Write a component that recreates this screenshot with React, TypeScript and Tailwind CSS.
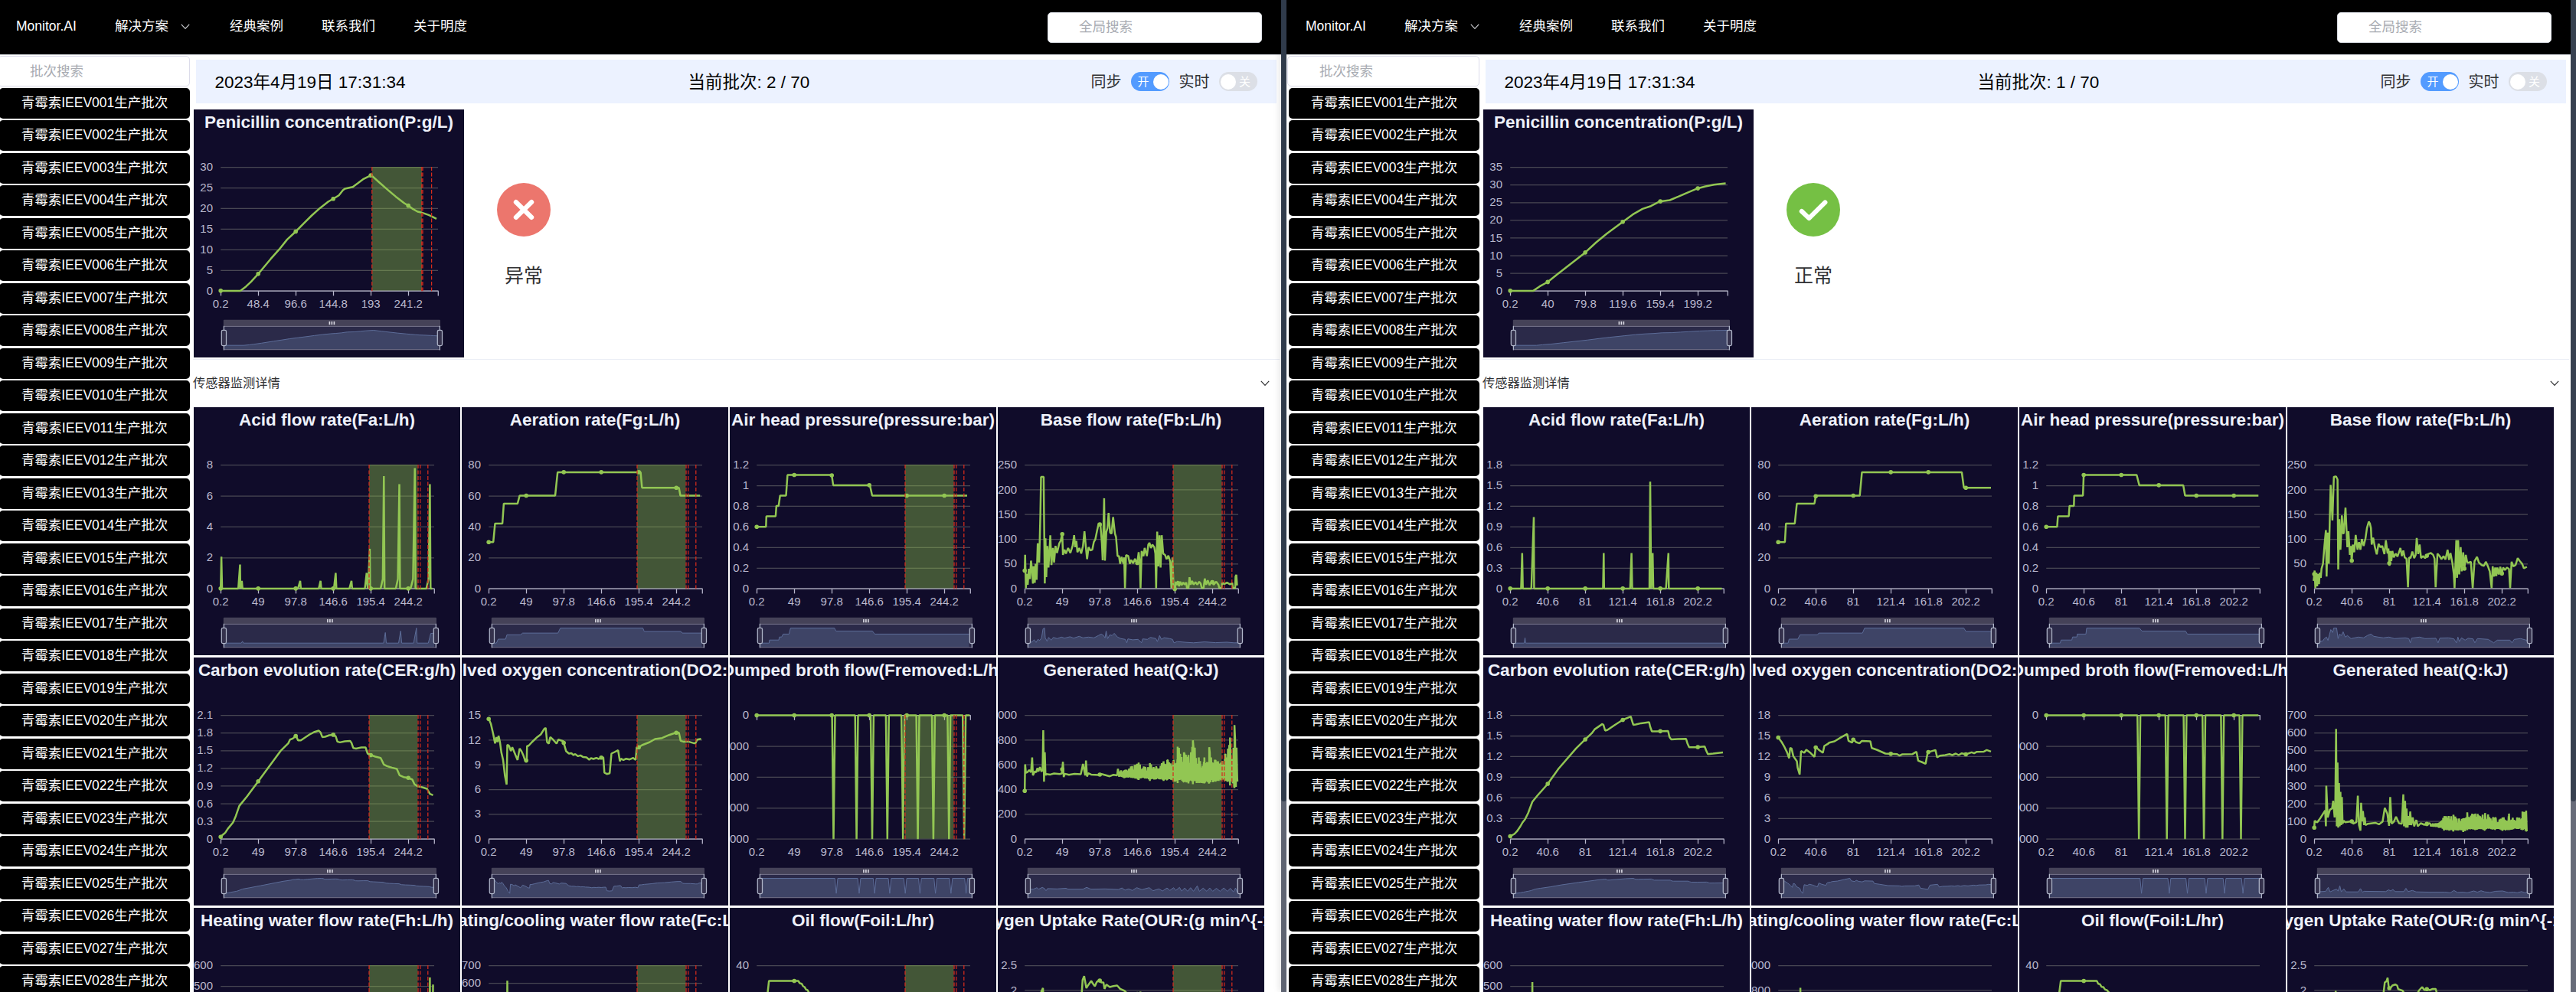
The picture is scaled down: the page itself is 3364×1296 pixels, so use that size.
import React from "react";

const FONT = "font-['Liberation_Sans','Noto_Sans_CJK_SC',sans-serif]";
const GREEN = "#92c653";

type Pt = [number, number];

type Series = {
  title: string;
  max: number;
  step: number;
  negative?: boolean;
  // digitizing frame: x of the y axis, y of the bottom grid line, horizontal units per pixel
  frame: [number, number, number];
  pts: Pt[];
  shadow?: Pt[];
};

const P = (s: string): Pt[] => s.trim().split(/\s+/).map((p) => p.split(",").map(Number) as Pt);

// Dense oscillation that stays inside an envelope of [x, top, bottom] knots.
function oscillate(env: [number, number, number][], dx: number): Pt[] {
  const out: Pt[] = [];
  let seed = 7;
  let up = true;
  for (let i = 0; i < env.length - 1; i++) {
    const [xa, ta, ba] = env[i];
    const [xb, tb, bb] = env[i + 1];
    out.push([xa, ta]);
    for (let x = xa + dx; x < xb; x += dx) {
      seed = (seed * 16807) % 2147483647;
      const r = seed / 2147483647;
      const k = (x - xa) / (xb - xa);
      const top = ta + (tb - ta) * k;
      const bot = ba + (bb - ba) * k;
      const mid = (top + bot * 1.6) / 2.6;
      out.push([x, up ? mid + (top - mid) * (0.35 + 0.65 * r) : mid + (bot - mid) * (0.75 + 0.25 * r)]);
      up = !up;
    }
    out.push([xb, bb]);
  }
  return out;
}

function drops(start: number, end: number, centers: number[]): Pt[] {
  const out: Pt[] = [[start, 253]];
  centers.forEach((c) => out.push([c - 4, 253], [c, 738], [c + 4, 253]));
  out.push([end, 253]);
  return out;
}

const T = {
  pen: "Penicillin concentration(P:g/L)",
  acid: "Acid flow rate(Fa:L/h)",
  aer: "Aeration rate(Fg:L/h)",
  air: "Air head pressure(pressure:bar)",
  base: "Base flow rate(Fb:L/h)",
  cer: "Carbon evolution rate(CER:g/h)",
  do2: "Dissolved oxygen concentration(DO2:mg/L)",
  dump: "Dumped broth flow(Fremoved:L/h)",
  heat: "Generated heat(Q:kJ)",
  hw: "Heating water flow rate(Fh:L/h)",
  cw: "Heating/cooling water flow rate(Fc:L/h)",
  oil: "Oil flow(Foil:L/hr)",
  our: "Oxygen Uptake Rate(OUR:(g min^{-1}))",
};

const A = 2.1778;
const B = 2.063;
const C = 2.1075;

const penicillinFault: Series = {
  title: T.pen, max: 30, step: 5, frame: [538, 1140, 1.8667],
  pts: P("538,1139 586,1139 600,1122 612,1104 630,1072 660,1014 680,978 700,938 721,907 740,876 760,844 780,815 800,790 813,778 826,765 836,745 841,739 860,732 872,718 885,702 905,686 925,715 945,743 965,770 985,795 997,807 1007,819 1018,829 1029,833 1045,842 1053,848 1064,857"),
};
const penicillinOk: Series = {
  title: T.pen, max: 35, step: 5, frame: [570, 1140, 1.8233],
  pts: P("570,1139 625,1139 640,1122 659,1105 690,1064 748,990 775,949 800,915 837,870 862,840 885,818 905,807 926,789 950,784 970,770 990,756 1016,738 1035,730 1055,723 1083,718"),
};

const faultSeries: Series[] = [
  {
    title: T.acid, max: 8, step: 2, frame: [105, 928, A],
    pts: P("105,927 107,802 109,927 155,927 160,833 161,927 165,897 167,927 325,927 331,897 333,927 384,927 389,897 391,927 427,927 432,866 434,927 471,927 477,897 479,927 515,927 520,866 523,927 526,866 529,771 530,927 560,927 566,890 569,486 571,927 603,927 609,890 613,518 615,927 645,927 652,890 657,455 659,927 690,927 696,890 700,518 702,927 707,927"),
    shadow: P("105,0 155,0 158,0.12 161,0 562,0 567,0.7 570,0 605,0 611,0.8 614,0 648,0 656,1 658,0 690,0 697,0.64 707,0.66"),
  },
  {
    title: T.aer, max: 80, step: 20, frame: [867, 928, A],
    pts: P("867,745 880,745 885,672 906,672 910,594 949,594 955,563 1056,563 1063,471 1299,471 1303,532 1408,532 1412,563 1468,563"),
  },
  {
    title: T.air, max: 1.2, step: 0.2, frame: [99, 928, B],
    pts: P("99,685 124,685 125,644 150,644 152,603 158,603 162,563 178,563 182,482 301,482 305,522 404,522 410,563 666,563"),
  },
  {
    title: T.base, max: 250, step: 50, frame: [821, 928, B],
    pts: P("821,857 822,795 824,925 827,870 829,912 832,850 835,890 838,818 841,860 843,908 845,840 848,905 850,830 853,893 856,750 860,825 863,640 865,489 872,489 873,640 875,907 877,730 879,882 882,760 885,845 888,770 890,718 893,835 897,768 900,825 904,760 908,788 914,750 918,740 922,710 924,795 928,775 932,790 938,768 944,788 950,760 954,718 957,765 960,740 963,785 968,768 973,790 978,760 982,703 986,770 989,812 993,765 998,778 1003,775 1007,745 1011,735 1016,700 1020,672 1025,678 1029,750 1031,816 1035,573 1037,818 1041,705 1044,690 1047,631 1051,708 1055,712 1059,647 1064,712 1067,725 1071,800 1075,800 1078,830 1082,803 1087,830 1089,805 1091,926 1094,796 1100,800 1104,830 1108,815 1113,828 1118,810 1124,830 1128,785 1131,825 1133,926 1136,780 1141,800 1144,768 1150,800 1154,755 1157,748 1161,768 1165,755 1170,765 1173,790 1175,926 1178,704 1181,840 1184,718 1187,845 1190,718 1194,790 1199,795 1203,812 1208,798 1213,822 1216,925 1219,805 1222,925 1226,930 1228,900 1231,914 1234,898 1237,918 1240,900 1244,914 1248,903 1252,912 1256,903 1258,925 1262,925 1265,883 1268,912 1272,897 1276,912 1281,902 1286,912 1291,900 1295,908 1298,925 1303,925 1306,888 1310,912 1314,895 1319,914 1325,898 1330,912 1337,900 1343,912 1345,925 1351,925 1353,903 1358,910 1366,904 1374,911 1380,905 1382,925 1388,925 1389,880 1391,873 1393,915"),
    shadow: P("821,.02 826,.18 830,.04 838,.22 843,.04 848,.25 853,.18 858,.35 862,.95 866,1 868,.35 873,.12 877,.38 884,.2 890,.38 900,.3 912,.4 920,.33 935,.42 945,.33 960,.45 970,.35 985,.4 1000,.35 1012,.5 1020,.6 1026,.5 1030,.35 1033,.8 1037,.3 1043,.55 1049,.5 1055,.65 1064,.4 1073,.3 1085,.25 1089,.02 1092,.28 1105,.22 1120,.25 1129,.02 1132,.28 1145,.25 1153,.38 1168,.3 1172,.1 1178,.5 1183,.25 1190,.36 1205,.3 1213,.25 1217,.02 1226,.1 1250,.05 1270,.02 1300,.08 1330,.03 1360,.06 1380,.02 1394,.02"),
  },
  {
    title: T.cer, max: 2.1, step: 0.3, frame: [105, 740, A],
    pts: P("105,731 112,722 118,715 125,700 140,675 148,650 158,610 180,573 211,515 275,395 297,365 302,350 310,346 319,335 325,353 333,353 345,342 358,330 372,320 384,315 389,322 394,340 402,339 414,333 425,331 432,337 437,358 444,361 458,357 473,355 477,363 482,383 490,385 505,381 517,381 523,405 532,411 545,417 560,422 569,448 578,454 592,460 606,465 614,490 625,497 638,500 650,507 656,525 665,533 678,537 692,543 700,563 709,568"),
  },
  {
    title: T.do2, max: 15, step: 3, frame: [867, 740, A],
    pts: P("867,269 873,288 880,330 885,365 889,340 892,360 895,335 899,360 903,400 908,430 913,490 918,526 920,370 925,375 930,395 934,380 943,410 949,430 955,385 960,395 965,410 970,430 975,433 976,375 980,375 990,360 1005,340 1015,330 1025,308 1029,304 1033,360 1038,366 1042,340 1050,350 1060,366 1065,350 1079,356 1087,395 1095,405 1102,403 1108,411 1113,407 1121,415 1128,412 1135,418 1145,420 1153,429 1158,423 1165,426 1173,422 1180,426 1188,420 1193,420 1196,480 1203,485 1211,482 1216,405 1225,399 1235,392 1240,435 1243,425 1250,430 1258,425 1268,428 1278,422 1285,430 1288,380 1294,380 1303,372 1325,360 1340,348 1360,344 1380,332 1399,323 1408,323 1413,355 1420,358 1435,358 1450,364 1455,364 1460,350 1471,347"),
  },
  {
    title: T.dump, max: 4000, step: 1000, negative: true, frame: [99, 738, B],
    pts: drops(99, 673, [306, 368, 410, 451, 493, 533, 575, 617, 658]),
  },
  {
    title: T.heat, max: 1000, step: 200, frame: [821, 740, B],
    pts: P("821,551 822,447 824,480 828,478 833,470 838,478 841,420 843,490 848,475 852,478 855,462 858,475 862,458 866,475 869,470 871,313 873,515 875,400 877,490 879,485 890,487 900,483 915,485 921,483 924,437 926,497 929,484 940,488 955,484 972,486 978,445 982,475 984,490 986,432 989,495 992,482 1000,487 1020,489 1028,485 1050,494 1060,488 1070,490").concat(
      oscillate([[1072, 465, 495], [1090, 470, 500], [1107, 455, 500], [1128, 440, 508], [1145, 458, 500], [1158, 442, 512], [1175, 455, 505], [1195, 435, 512], [1205, 430, 508], [1222, 430, 515], [1233, 378, 520], [1250, 400, 515], [1262, 410, 522], [1274, 353, 525], [1290, 420, 520], [1305, 420, 522], [1318, 380, 522], [1335, 430, 515], [1350, 440, 510], [1360, 410, 512], [1374, 342, 530], [1380, 440, 515], [1386, 293, 540], [1390, 400, 535], [1394, 302, 515]], 1.7)),
    shadow: P("821,.3 824,.28 836,.28 845,.38 850,.28 860,.4 866,.32 870,.18 874,.32 900,.3 924,.34 930,.28 970,.28 980,.4 988,.32 992,.28 1030,.3 1066,.26 1076,.36 1084,.22 1094,.3 1104,.2 1116,.38 1130,.25 1150,.38 1160,.18 1176,.3 1186,.16 1198,.36 1206,.2 1216,.38 1222,.2 1232,.4 1238,.15 1246,.36 1254,.14 1262,.38 1270,.14 1280,.5 1286,.14 1296,.35 1306,.14 1314,.36 1322,.14 1332,.34 1342,.14 1352,.36 1362,.14 1370,.34 1378,.1 1384,.36 1388,.1 1394,.3"),
  },
  {
    title: T.hw, max: 600, step: 100, frame: [105, 1719, A],
    pts: P("105,1719 698,1719 700,1280 702,1719 707,1719 709,1308"),
  },
  {
    title: T.cw, max: 700, step: 100, frame: [867, 1719, A],
    pts: P("867,1690 918,1690 920,1293 922,1690 1471,1690"),
  },
  {
    title: T.oil, max: 40, step: 10, frame: [99, 1719, B],
    pts: P("99,1600 124,1400 132,1294 211,1294 215,1303 220,1305 224,1315 228,1318 232,1328 236,1330 240,1340 260,1400 666,1500"),
  },
  {
    title: T.our, max: 2.5, step: 0.5, frame: [821, 1719, B],
    pts: P("821,1700 860,1400 866,1335 870,1322 873,1400 972,1400 977,1290 981,1275 987,1322 992,1310 1000,1294 1005,1305 1010,1315 1015,1298 1022,1290 1027,1300 1033,1300 1036,1325 1041,1308 1050,1318 1060,1314 1070,1312 1078,1325 1090,1333 1098,1345 1128,1345 1133,1338 1138,1350 1394,1600"),
  },
];

const okSeries: Series[] = [
  {
    title: T.acid, max: 1.8, step: 0.3, frame: [113, 928, A],
    pts: P("113,927 144,927 147,788 149,927 173,927 180,647 181,927 377,927 379,788 380,927 454,927 458,788 460,927 509,927 511,508 514,927 518,788 520,927 556,927 563,788 564,927 715,927"),
    shadow: P("113,0 144,0 146,.35 148,0 715,0"),
  },
  {
    title: T.aer, max: 80, step: 20, frame: [875, 928, A],
    pts: P("875,745 894,745 897,672 922,672 928,594 978,594 982,563 1107,563 1113,471 1397,471 1403,532 1480,532"),
  },
  {
    title: T.air, max: 1.2, step: 0.2, frame: [110, 928, C],
    pts: P("110,685 140,685 142,644 172,644 174,603 186,603 187,563 211,563 213,482 359,482 366,522 487,522 492,563 694,563"),
  },
  {
    title: T.base, max: 250, step: 50, frame: [847, 928, C],
    pts: P("845,897 848,857 850,925 853,865 855,918 857,870 860,910 862,865 865,885 867,850 871,830 875,760 879,698 881,880 884,708 887,830 890,640 892,521 897,660 901,489 907,488 911,500 913,852 916,655 919,775 923,640 926,710 928,712 933,610 938,765 941,703 945,795 948,760 950,824 953,755 957,785 961,717 966,775 970,745 974,775 978,733 983,760 988,730 992,690 997,665 1000,672 1003,690 1005,755 1009,728 1014,765 1019,793 1024,752 1029,765 1034,760 1040,792 1044,738 1049,790 1051,770 1054,838 1056,780 1059,820 1062,780 1066,805 1071,790 1076,802 1084,768 1088,800 1092,778 1096,805 1101,810 1105,922 1108,805 1112,808 1117,782 1122,808 1126,795 1129,729 1133,792 1137,755 1141,808 1146,800 1152,808 1160,792 1168,788 1174,795 1178,810 1181,922 1186,790 1192,800 1197,812 1203,800 1208,813 1214,775 1218,815 1222,788 1227,825 1231,870 1233,925 1238,738 1240,885 1243,738 1246,872 1250,765 1253,860 1257,785 1260,850 1264,795 1268,825 1273,825 1278,822 1283,925 1288,820 1295,803 1300,825 1308,835 1314,838 1319,822 1325,840 1330,860 1335,925 1338,840 1342,880 1345,845 1348,878 1351,845 1355,872 1359,842 1363,870 1367,845 1372,855 1377,845 1383,850 1386,925 1390,822 1395,840 1401,835 1407,808 1413,820 1419,830 1424,848 1432,842"),
    shadow: P("847,.02 853,.1 862,.15 866,.3 872,.4 876,.18 884,.9 889,.7 892,1 900,1 904,.3 908,.6 913,.5 918,.75 924,.4 930,.5 940,.3 960,.4 975,.35 985,.5 995,.6 1003,.45 1015,.4 1030,.35 1045,.4 1060,.3 1090,.35 1100,.3 1104,.02 1108,.33 1130,.4 1145,.3 1175,.32 1181,.02 1186,.33 1210,.35 1225,.28 1232,.02 1236,.4 1240,.1 1246,.35 1256,.2 1264,.32 1278,.28 1283,.02 1290,.3 1320,.25 1335,.02 1345,.2 1380,.2 1386,.02 1392,.25 1410,.3 1425,.2 1432,.2"),
  },
  {
    title: T.cer, max: 1.8, step: 0.3, frame: [113, 740, A],
    pts: P("113,729 125,720 132,710 142,690 148,675 155,663 164,638 176,594 190,570 219,525 250,465 300,385 326,350 345,325 353,310 375,289 378,292 383,315 390,312 410,293 433,273 456,260 459,275 463,292 470,291 485,286 508,282 511,300 516,318 530,318 562,316 566,340 571,349 590,348 613,347 617,365 622,380 640,380 666,377 670,392 675,407 690,405 718,400"),
  },
  {
    title: T.do2, max: 18, step: 3, frame: [875, 740, A],
    pts: P("875,342 884,358 893,380 900,400 906,423 909,383 913,385 918,415 928,435 930,460 936,487 940,395 949,402 955,390 965,400 978,418 982,378 990,390 1002,402 1006,375 1015,368 1020,362 1035,357 1055,340 1071,328 1075,355 1085,362 1089,348 1096,360 1106,365 1113,355 1137,357 1141,383 1155,390 1180,405 1213,407 1220,413 1228,408 1257,407 1268,398 1273,433 1283,438 1294,445 1300,400 1322,391 1327,420 1335,413 1350,411 1362,407 1370,411 1380,405 1388,411 1397,404 1409,408 1425,400 1432,404 1440,398 1460,397 1468,391 1480,397"),
  },
  {
    title: T.dump, max: 4000, step: 1000, negative: true, frame: [110, 738, C],
    pts: drops(110, 694, [365, 442, 492, 544, 595, 646]),
  },
  {
    title: T.heat, max: 700, step: 100, frame: [847, 740, C],
    pts: P("847,695 848,668 855,675 865,655 877,628 879,690 880,531 884,655 890,625 896,620 899,590 903,655 905,600 907,308 909,690 911,440 913,695 915,520 917,690 919,555 921,685 923,575 925,680 928,668 932,674 950,670 954,680 963,674 967,570 970,685 974,707 976,598 979,670 981,630 984,685 986,655 988,685 995,680 1015,676 1025,682 1035,672 1041,618 1048,640 1053,688 1056,575 1060,680 1066,672 1072,652 1080,678 1088,680 1092,565 1094,690 1097,590 1099,695 1101,620 1104,695 1106,650 1109,685 1111,632 1114,685 1118,655 1122,690 1128,665 1132,690 1140,678 1150,684 1158,680").concat(
      oscillate([[1165, 678, 690], [1190, 676, 694], [1205, 650, 705], [1230, 645, 710], [1245, 660, 705], [1257, 658, 712], [1268, 635, 705], [1290, 640, 705], [1317, 638, 705], [1345, 655, 702], [1365, 655, 708], [1383, 640, 705], [1405, 655, 700], [1420, 632, 705], [1432, 628, 710]], 1.7)),
    shadow: P("847,.1 870,.14 877,.4 882,.1 890,.2 900,.28 904,.15 909,.5 913,.1 920,.3 926,.1 960,.1 966,.32 972,.08 976,.14 1036,.12 1044,.24 1050,.16 1056,.26 1062,.12 1086,.12 1092,.34 1098,.12 1110,.2 1120,.1 1160,.08 1200,.08 1215,.04 1225,.2 1235,.06 1250,.08 1262,.04 1280,.16 1290,.08 1300,.18 1310,.1 1325,.06 1340,.14 1360,.16 1375,.06 1390,.08 1400,.04 1412,.12 1422,.04 1428,.1 1432,.02"),
  },
  {
    title: T.hw, max: 600, step: 100, frame: [113, 1719, A],
    pts: P("113,1719 174,1719 176,1298 178,1719 715,1719"),
  },
  {
    title: T.cw, max: 1000, step: 200, frame: [875, 1719, A],
    pts: P("875,1690 936,1690 938,1321 940,1690 1480,1690"),
  },
  {
    title: T.oil, max: 40, step: 10, frame: [110, 1719, C],
    pts: P("110,1600 146,1338 150,1294 249,1294 253,1305 258,1307 262,1317 267,1318 272,1328 277,1330 283,1340 300,1400 694,1500"),
  },
  {
    title: T.our, max: 2.5, step: 0.5, frame: [847, 1719, C],
    pts: P("847,1700 904,1400 906,1333 908,1400 1036,1400 1038,1338 1041,1300 1046,1295 1049,1282 1052,1320 1055,1325 1062,1312 1070,1308 1075,1312 1078,1326 1090,1332 1096,1345 1130,1345 1136,1330 1144,1318 1150,1330 1157,1326 1165,1330 1173,1325 1181,1325 1185,1345 1200,1400 1432,1600"),
  },
];

const TOP = 75.6;
const BOTTOM = 237.2;
const LEFT = 35.2;

function yAt(pts: Pt[], x: number) {
  for (let i = 1; i < pts.length; i++) {
    if (pts[i][0] >= x) {
      const [xa, ya] = pts[i - 1];
      const [xb, yb] = pts[i];
      return xb === xa ? yb : ya + ((yb - ya) * (x - xa)) / (xb - xa);
    }
  }
  return pts[pts.length - 1][1];
}

const toPath = (pts: Pt[]) => "M" + pts.map(([x, y]) => `${x.toFixed(1)} ${y.toFixed(1)}`).join("L");

function formatTick(v: number, negative?: boolean) {
  const r = Math.round(v * 10) / 10;
  return (negative && r > 0 ? "-" : "") + r.toLocaleString("en-US");
}

function Chart({ s, width, xLabels, marks, tickStep = 49 }: { s: Series; width: number; xLabels: string[]; marks?: number[]; tickStep?: number }) {
  const [x0, y0, sx] = s.frame;
  const right = width - 34;
  const pts = s.pts.map(([x, y]): Pt => [LEFT + (x - x0) / sx, BOTTOM + (y - y0) / 3]);
  const count = Math.round(s.max / s.step);
  const ticks = xLabels.map((_, i) => LEFT + i * tickStep);
  const zl = 39.4;
  const zr = width - 31.6;
  const zx = (x: number) => zl + ((x - LEFT) / (right - LEFT)) * (zr - zl);
  const ys = pts.map((p) => p[1]);
  const hi = Math.min(...ys);
  const lo = Math.max(...ys);
  const shadow: Pt[] = s.shadow
    ? s.shadow.map(([x, v]): Pt => [zx(LEFT + (x - x0) / sx), 308.2 - v * 19.7])
    : pts.map(([x, y]): Pt => [zx(x), 308.2 - ((lo - y) / (lo - hi)) * 19.7]);
  const axisY = s.negative ? TOP : BOTTOM;
  return (
    <svg width={width} height={324} className="block overflow-hidden bg-[#100c2a]">
      {Array.from({ length: count + 1 }, (_, i) => {
        const y = BOTTOM - (i / count) * (BOTTOM - TOP);
        return (
          <g key={i}>
            <line x1={LEFT} x2={right} y1={y} y2={y} stroke="#484753" strokeWidth={1.25} />
            <text x={25} y={y + 4.6} textAnchor="end" fontSize={15} fill="#b9b8ce" className={FONT}>
              {formatTick(s.negative ? s.max - i * s.step : i * s.step, s.negative)}
            </text>
          </g>
        );
      })}
      <line x1={LEFT} x2={right + 0.6} y1={axisY} y2={axisY} stroke="#b9b8ce" strokeWidth={1.25} />
      {[...ticks, right].map((x) => (
        <line key={x} x1={x + 0.3} x2={x + 0.3} y1={axisY} y2={axisY + 6.2} stroke="#b9b8ce" strokeWidth={1.25} />
      ))}
      {xLabels.map((l, i) => (
        <text key={l} x={ticks[i]} y={259.2} textAnchor="middle" fontSize={15} fill="#b9b8ce" className={FONT}>
          {l}
        </text>
      ))}
      {marks && <rect x={marks[0]} y={TOP - 0.6} width={marks[1] - marks[0]} height={BOTTOM - TOP} fill="#92c64b" fillOpacity={0.4} />}
      <path d={toPath(pts)} fill="none" stroke={GREEN} strokeWidth={2.5} strokeLinejoin="bevel" />
      {ticks.map((x) => (
        <circle key={x} cx={x} cy={yAt(pts, x)} r={2.8} fill={GREEN} />
      ))}
      {marks &&
        [marks[0], ...marks.slice(2)].map((x) => (
          <line key={x} x1={x} x2={x} y1={TOP - 0.6} y2={BOTTOM} stroke="#d62c1c" strokeWidth={1.25} strokeDasharray="5 2.5" />
        ))}
      <text x={width / 2} y={24.4} textAnchor="middle" fontSize={22.5} fontWeight={700} fill="#eef1fa" className={FONT}>
        {s.title}
      </text>
      <rect x={zl - 0.6} y={274.8} width={zr - zl + 1.2} height={8.7} rx={1} fill="#454258" />
      <rect x={zl} y={283.4} width={zr - zl} height={30.3} fill="#2b2a49" />
      <path d={`${toPath(shadow)}L${shadow[shadow.length - 1][0]} 313.6L${shadow[0][0]} 313.6Z`} fill="#3e4466" />
      <path d={toPath(shadow)} fill="none" stroke="#5c6c98" strokeWidth={1} />
      <rect x={zl} y={283.4} width={zr - zl} height={30.3} fill="none" stroke="#77758c" strokeWidth={1} />
      {[-3, 0, 3].map((d) => (
        <line key={d} x1={(zl + zr) / 2 + d} x2={(zl + zr) / 2 + d} y1={277} y2={281.2} stroke="#dcdce6" strokeWidth={1.6} />
      ))}
      {[zl, zr].map((x) => (
        <g key={x} stroke="#b0b6c9" strokeWidth={1.25}>
          <line x1={x} x2={x} y1={282.8} y2={314.4} />
          <rect x={x - 3.1} y={288.4} width={6.2} height={20.2} rx={1.8} fill="#35324d" />
        </g>
      ))}
    </svg>
  );
}

function Chevron({ className }: { className: string }) {
  return (
    <svg width={12} height={8} viewBox="0 0 12 8" className={className} fill="none" stroke="currentColor" strokeWidth={1.2}>
      <path d="M0.8 0.8L6 6.4L11.2 0.8" />
    </svg>
  );
}

function Toggle({ on }: { on?: boolean }) {
  return on ? (
    <div className="flex h-[25px] w-[50px] items-center justify-between rounded-full bg-[#539bff] pl-[8.5px] pr-[1.5px] text-[15px] leading-none text-white">
      <span>开</span>
      <span className="size-5 rounded-full bg-white" />
    </div>
  ) : (
    <div className="flex h-[25px] w-[50px] items-center justify-between rounded-full bg-[#dcdfe6] pl-[1.5px] pr-[9px] text-[15px] leading-none text-white">
      <span className="size-5 rounded-full bg-white" />
      <span>关</span>
    </div>
  );
}

function StatusIcon({ ok }: { ok: boolean }) {
  return (
    <svg width={70} height={70} viewBox="0 0 70 70">
      <circle cx={35} cy={35} r={35} fill={ok ? "#75c044" : "#ec766d"} />
      <path
        d={ok ? "M19.8 37L29.4 46.2L50.4 25.4" : "M24.8 25L45.2 45M45.2 25L24.8 45"}
        fill="none"
        stroke="#fff"
        strokeWidth={6}
        strokeLinecap="round"
        strokeLinejoin="round"
      />
    </svg>
  );
}

type PaneProps = {
  ok: boolean;
  current: number;
  top: Series;
  series: Series[];
  topLabels: string[];
  labels: string[];
  topMarks?: number[];
  marks?: number[];
};

function Pane({ ok, current, top, series, topLabels, labels, topMarks, marks }: PaneProps) {
  return (
    <div className="flex h-[1296px] w-[1684px] shrink-0">
      <div className="flex w-[1677px] flex-col overflow-hidden bg-white">
        <header className="flex h-[72px] shrink-0 items-center border-b border-[#dcdfe6] bg-black pl-[25px] pr-[25px] text-[17.5px] leading-[26px] text-white">
          <nav className="flex flex-1 items-center pb-[3px]">
            <span className="w-[129px]">Monitor.AI</span>
            <span className="flex w-[150px] items-center">
              解决方案
              <Chevron className="ml-[16px] mt-[2px] text-[#c8c9cc]" />
            </span>
            <span className="w-[120px]">经典案例</span>
            <span className="w-[120px]">联系我们</span>
            <span>关于明度</span>
          </nav>
          <div className="flex h-10 w-[280px] items-center rounded-[5px] border border-[#dcdfe6] bg-white pb-px pl-10 text-[#a8abb2]">全局搜索</div>
        </header>
        <div className="flex flex-1">
          <aside className="flex w-[256px] shrink-0 flex-col pt-px text-[17.5px] leading-[26px]">
            <div className="ml-px flex h-10 w-[251px] shrink-0 items-center rounded-[5px] border border-[#dcdcea] bg-white pl-[41px] text-[#a8abb2]">批次搜索</div>
            <div className="ml-[3px] mt-[1.75px] flex w-[249px] flex-col gap-[2.5px]">
              {Array.from({ length: 28 }, (_, i) => (
                <div key={i} className="flex h-10 shrink-0 items-center justify-center rounded-[5px] bg-black pb-[2px] text-white">
                  {`青霉素IEEV${String(i + 1).padStart(3, "0")}生产批次`}
                </div>
              ))}
            </div>
          </aside>
          <main className="w-[1419px] pt-[6px]">
            <div className="ml-1 mr-1 flex h-[57px] items-center bg-[#ecf2ff] pl-[24.5px] pr-[25px] text-[22.5px] text-black">
              <span className="w-[618px] pt-[3px]">2023年4月19日 17:31:34</span>
              <span className="flex-1 pt-[3px]">当前批次: {current} / 70</span>
              <div className="flex items-center text-[20px] text-[#303133]">
                <span className="mr-[12.5px]">同步</span>
                <Toggle on />
                <span className="ml-[12.5px] mr-[12.5px]">实时</span>
                <Toggle />
              </div>
            </div>
            <section className="mt-2 flex h-[327px] border-b border-[#ebeef5] pl-px">
              <Chart s={top} width={353} xLabels={topLabels} marks={topMarks} />
              <div className="ml-[43px] flex flex-col items-center pt-24">
                <StatusIcon ok={ok} />
                <span className="mt-[31px] text-[25px] leading-[40px] text-[#303133]">{ok ? "正常" : "异常"}</span>
              </div>
            </section>
            <div className="flex h-[62px] items-center justify-between pb-px pr-[13px] text-[16.25px] text-[#303133]">
              <span>传感器监测详情</span>
              <Chevron className="text-[#303133]" />
            </div>
            <section className="grid grid-cols-[repeat(4,348px)] gap-x-[2px] gap-y-[3px] pl-px">
              {series.map((s) => (
                <Chart key={s.title} s={s} width={348} xLabels={labels} marks={marks} />
              ))}
            </section>
          </main>
        </div>
      </div>
      <div className={ok ? "w-[7px] bg-[#686c7a]" : "w-[7px] bg-[#5f6472] shadow-[-2px_0_8px_rgba(0,0,0,0.12)]"}>
        <div className={ok ? "h-[1047px] rounded-b-full bg-[#384150]" : "h-[1047px] rounded-b-full bg-[#303b4b]"} />
      </div>
    </div>
  );
}

export default function App() {
  return (
    <div className={`h-[1296px] w-[3364px] overflow-hidden bg-white ${FONT}`}>
      <div className="-ml-1 flex">
        <Pane
          ok={false}
          current={2}
          top={penicillinFault}
          series={faultSeries}
          topLabels={["0.2", "48.4", "96.6", "144.8", "193", "241.2"]}
          labels={["0.2", "49", "97.8", "146.6", "195.4", "244.2"]}
          topMarks={[232.8, 298, 297.8, 299, 310.6]}
          marks={[229, 292.4, 293, 295.8, 305.8]}
        />
        <Pane
          ok
          current={1}
          top={penicillinOk}
          series={okSeries}
          topLabels={["0.2", "40", "79.8", "119.6", "159.4", "199.2"]}
          labels={["0.2", "40.6", "81", "121.4", "161.8", "202.2"]}
        />
      </div>
    </div>
  );
}
